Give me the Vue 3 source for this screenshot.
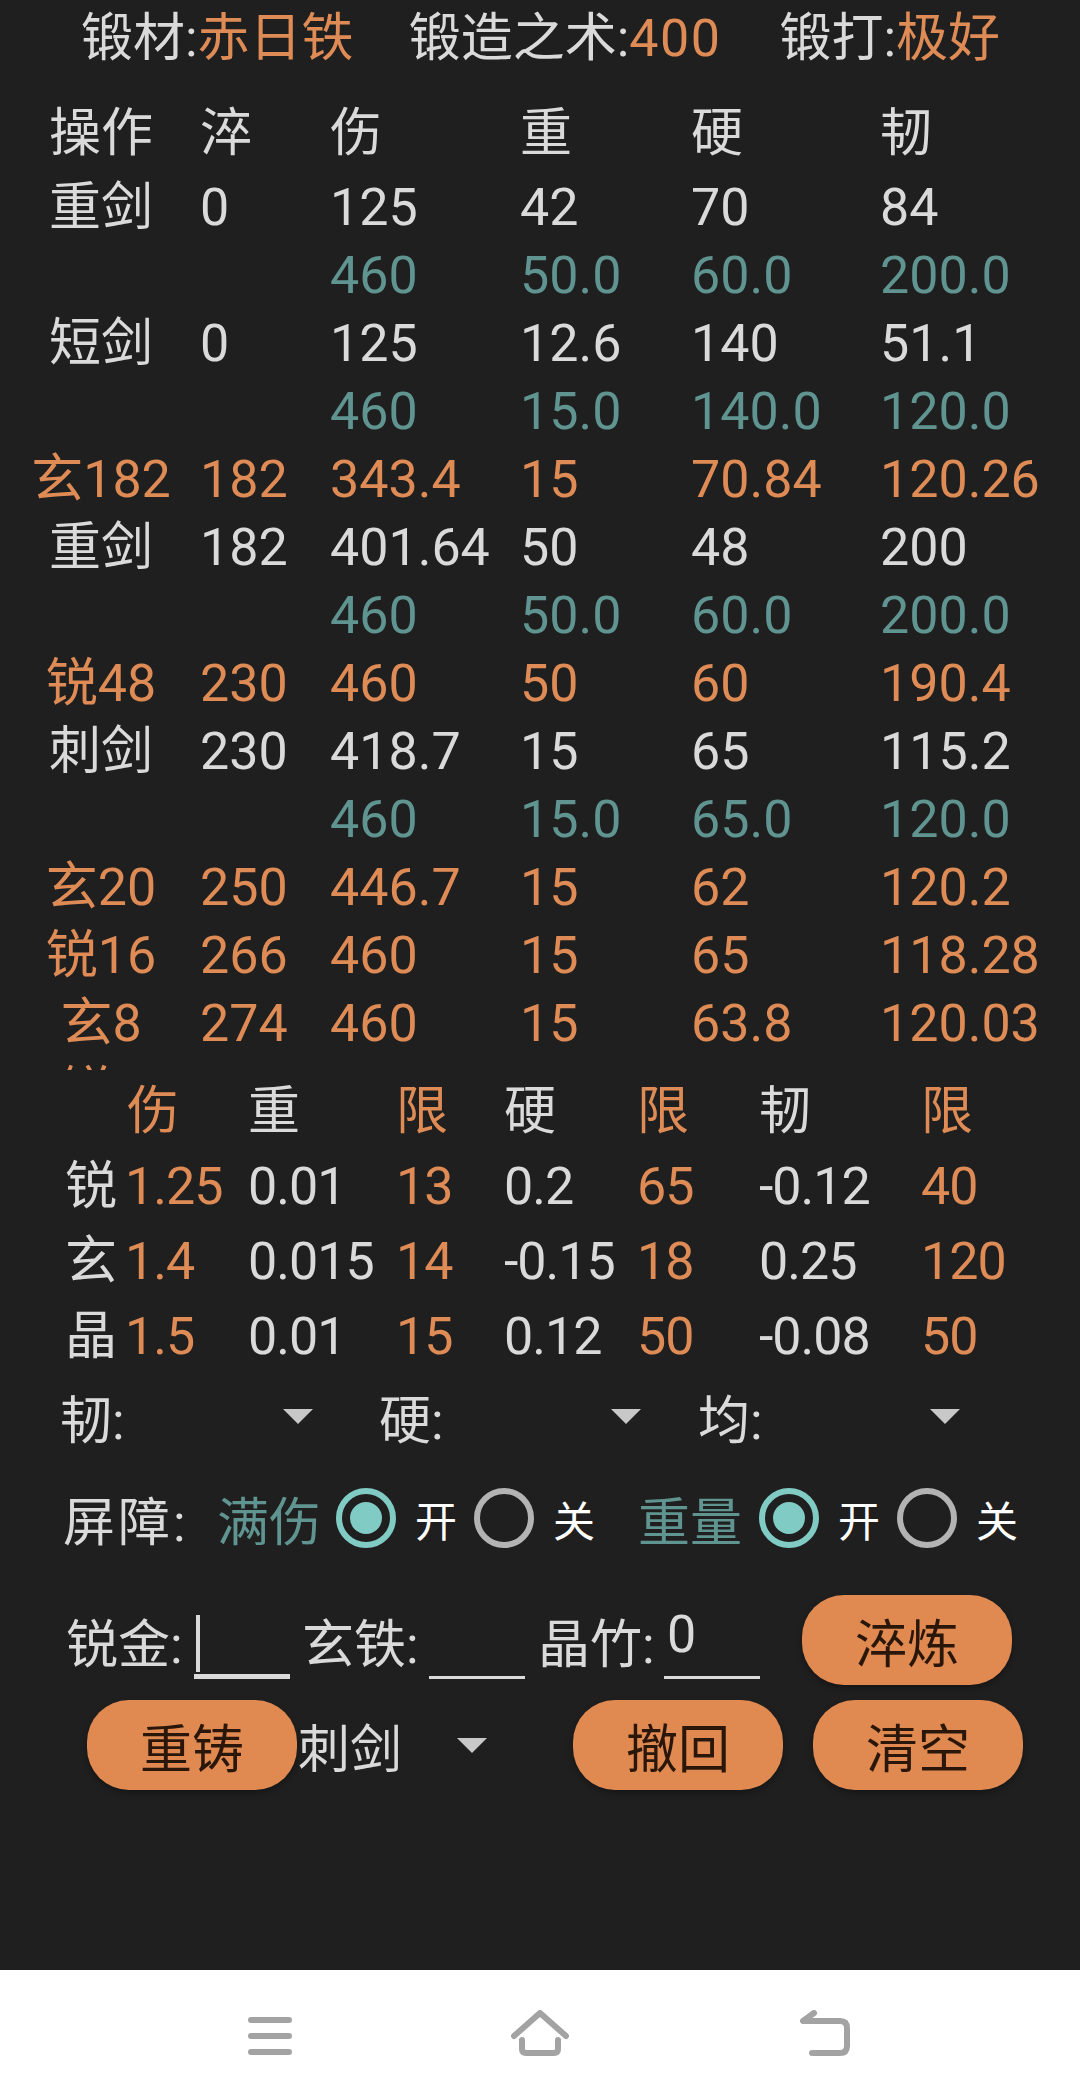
<script setup>
const head = ['操作', '淬', '伤', '重', '硬', '韧']
const rows = [
  { t: 'w', c: ['重剑', '0', '125', '42', '70', '84'] },
  { t: 'g', c: ['', '', '460', '50.0', '60.0', '200.0'] },
  { t: 'w', c: ['短剑', '0', '125', '12.6', '140', '51.1'] },
  { t: 'g', c: ['', '', '460', '15.0', '140.0', '120.0'] },
  { t: 'o', c: ['玄182', '182', '343.4', '15', '70.84', '120.26'] },
  { t: 'w', c: ['重剑', '182', '401.64', '50', '48', '200'] },
  { t: 'g', c: ['', '', '460', '50.0', '60.0', '200.0'] },
  { t: 'o', c: ['锐48', '230', '460', '50', '60', '190.4'] },
  { t: 'w', c: ['刺剑', '230', '418.7', '15', '65', '115.2'] },
  { t: 'g', c: ['', '', '460', '15.0', '65.0', '120.0'] },
  { t: 'o', c: ['玄20', '250', '446.7', '15', '62', '120.2'] },
  { t: 'o', c: ['锐16', '266', '460', '15', '65', '118.28'] },
  { t: 'o', c: ['玄8', '274', '460', '15', '63.8', '120.03'] },
  { t: 'o', c: ['锐4', '', '', '', '', ''] }
]
const matHead = ['', '伤', '重', '限', '硬', '限', '韧', '限']
const matRows = [
  ['锐', '1.25', '0.01', '13', '0.2', '65', '-0.12', '40'],
  ['玄', '1.4', '0.015', '14', '-0.15', '18', '0.25', '120'],
  ['晶', '1.5', '0.01', '15', '0.12', '50', '-0.08', '50']
]
</script>

<template>
  <div class="page">
    <main class="main">
      <div class="top">
        <span class="top-a">锻材:<b>赤日铁</b></span>
        <span class="top-b">锻造之术:<b class="num">400</b></span>
        <span class="top-c">锻打:<b>极好</b></span>
      </div>

      <div class="log">
        <div class="log-row log-head">
          <span v-for="(h, i) in head" :key="i" class="cell">{{ h }}</span>
        </div>
        <div class="log-scroll">
          <div v-for="(r, i) in rows" :key="i" class="log-row" :class="'tone-' + r.t">
            <span v-for="(c, j) in r.c" :key="j" class="cell">{{ c }}</span>
          </div>
        </div>
      </div>

      <div class="mat">
        <div class="mat-row mat-head">
          <span v-for="(h, i) in matHead" :key="i" :class="{ ora: h === '伤' || h === '限' }">{{ h }}</span>
        </div>
        <div v-for="(r, i) in matRows" :key="i" class="mat-row">
          <span v-for="(c, j) in r" :key="j" :class="{ ora: j === 1 || j === 3 || j === 5 || j === 7 }">{{ c }}</span>
        </div>
      </div>

      <div class="selects">
        <div class="sel sel-a"><span>韧:</span><i class="arrow"></i></div>
        <div class="sel sel-b"><span>硬:</span><i class="arrow"></i></div>
        <div class="sel sel-c"><span>均:</span><i class="arrow"></i></div>
      </div>

      <div class="shield">
        <span class="shield-label">屏障:</span>
        <span class="teal first-teal">满伤</span>
        <i class="radio on"></i><span class="opt">开</span>
        <i class="radio"></i><span class="opt">关</span>
        <span class="teal second-teal">重量</span>
        <i class="radio on"></i><span class="opt">开</span>
        <i class="radio"></i><span class="opt">关</span>
      </div>

      <div class="inputs">
        <span class="in-label in-a">锐金:</span>
        <span class="field focus"><i class="caret"></i></span>
        <span class="in-label in-b">玄铁:</span>
        <span class="field"></span>
        <span class="in-label in-c">晶竹:</span>
        <span class="field">0</span>
        <button class="btn btn-temper">淬炼</button>
      </div>

      <div class="actions">
        <button class="btn btn-recast">重铸</button>
        <div class="sel sel-d"><span>刺剑</span><i class="arrow"></i></div>
        <button class="btn btn-undo">撤回</button>
        <button class="btn btn-clear">清空</button>
      </div>
    </main>

    <nav class="nav">
      <svg class="ico ico-menu" width="44" height="38" viewBox="0 0 44 38">
        <path d="M3 3H41M3 19H41M3 35H41" />
      </svg>
      <svg class="ico ico-home" width="58" height="46" viewBox="0 0 58 46">
        <path d="M3 26L29 3L55 26" />
        <path d="M11 30V39Q11 43 15 43H43Q47 43 47 39V30" />
      </svg>
      <svg class="ico ico-back" width="50" height="46" viewBox="0 0 50 46">
        <path d="M14 3L3 11H40Q47 11 47 18V36Q47 43 40 43H12" />
      </svg>
    </nav>
  </div>
</template>

<style>
html, body { margin: 0; background: #1f1f1f; }
</style>

<style scoped>
.page {
  width: 1080px;
  height: 2096px;
  display: flex;
  flex-direction: column;
  background: #1f1f1f;
  color: #dadada;
  font-family: Roboto, "Noto Sans CJK SC", sans-serif;
  font-size: 52px;
  overflow: hidden;
}
.main { flex: 1; min-height: 0; }
b { font-weight: 400; color: #df8b55; }
.ora { color: #df8b55; }

.top {
  height: 78px;
  padding-left: 81px;
  display: flex;
  line-height: 78px;
  white-space: nowrap;
}
.top-b { margin-left: 55px; }
.top-c { margin-left: 58px; }
.num { letter-spacing: 1.5px; }

.log { margin-top: 18px; padding-left: 26px; }
.log-row {
  display: grid;
  grid-template-columns: 174px 130px 190px 171px 189px 1fr;
  height: 68px;
  line-height: 68px;
  white-space: nowrap;
}
.log-head { height: 78px; line-height: 76px; }
.log-scroll { height: 896px; overflow: hidden; }
.cell:first-child { text-align: center; padding-right: 24px; }
.tone-g { color: #5f9490; }
.tone-o { color: #df8b55; }

.mat { margin-top: 4px; padding-left: 65px; letter-spacing: -1px; }
.mat-row {
  display: grid;
  grid-template-columns: 60px 123px 148px 108px 133px 122px 162px 1fr;
  height: 75px;
  line-height: 75px;
  white-space: nowrap;
}
.mat-head span:nth-child(2) { padding-left: 2px; }

.selects { display: flex; margin-top: 2px; padding-left: 60px; height: 80px; align-items: center; }
.sel { display: flex; align-items: center; justify-content: space-between; height: 80px; }
.sel-a { width: 253px; margin-right: 66px; }
.sel-b { width: 262px; margin-right: 57px; }
.sel-c { width: 262px; }
.arrow {
  width: 0;
  height: 0;
  border-left: 15px solid transparent;
  border-right: 15px solid transparent;
  border-top: 15px solid #c8c8c8;
}

.shield { display: flex; align-items: center; height: 60px; margin-top: 32px; padding-left: 63px; }
.shield-label { width: 154px; letter-spacing: 3px; }
.teal { color: #5f9490; }
.first-teal { width: 119px; }
.second-teal { width: 121px; margin-left: 26px; }
.radio {
  box-sizing: border-box;
  width: 60px;
  height: 60px;
  border-radius: 50%;
  border: 6px solid #b3b3b3;
  position: relative;
  flex: none;
}
.radio.on { border-color: #80cbc4; }
.radio.on::after {
  content: "";
  position: absolute;
  inset: 8px;
  border-radius: 50%;
  background: #80cbc4;
}
.opt { font-size: 42px; color: #fff; margin: 0 19px; width: 40px; }

.inputs { display: flex; align-items: center; height: 90px; margin-top: 47px; padding-left: 66px; position: relative; }
.field {
  box-sizing: border-box;
  width: 96px;
  height: 64px;
  border-bottom: 3px solid #dadada;
  line-height: 40px;
  padding-left: 3px;
  margin-top: 14px;
  position: relative;
  flex: none;
}
.field.focus { border-bottom-width: 5px; }
.caret {
  position: absolute;
  left: 2px;
  top: 0;
  width: 4px;
  height: 57px;
  background: #dadada;
}
.in-a { width: 128px; }
.in-b { width: 127px; margin-left: 12px; }
.in-c { width: 126px; margin-left: 13px; }

.btn {
  box-sizing: border-box;
  width: 210px;
  height: 90px;
  border: 0;
  border-radius: 42px;
  background: #e08a52;
  color: #2a170a;
  font: inherit;
  padding: 0;
  box-shadow: 0 3px 6px rgba(0, 0, 0, 0.3);
  flex: none;
}
.btn-temper { margin-left: 42px; }

.actions { display: flex; align-items: center; height: 90px; margin-top: 15px; padding-left: 87px; }
.sel-d { width: 189px; margin: 0 0 0 1px; }
.btn-undo { margin-left: 86px; }
.btn-clear { margin-left: 30px; }

.nav {
  height: 126px;
  flex: none;
  background: #fff;
  position: relative;
}
.ico { position: absolute; fill: none; stroke: #a3a3a3; stroke-width: 6; stroke-linecap: round; stroke-linejoin: round; }
.ico-menu { left: 248px; top: 47px; }
.ico-home { left: 511px; top: 40px; }
.ico-back { left: 800px; top: 40px; }
</style>
